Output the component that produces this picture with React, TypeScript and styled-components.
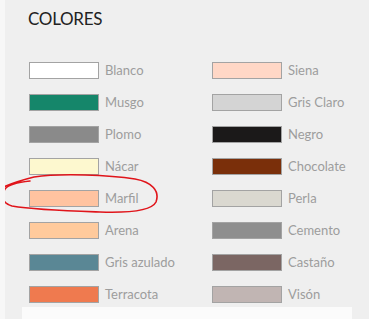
import React from 'react';
import styled, { createGlobalStyle } from 'styled-components';

const GlobalStyle = createGlobalStyle`
  html, body {
    margin: 0;
    padding: 0;
    background: #efefef;
  }
  body {
    font-family: Lato, "Open Sans", "Liberation Sans", sans-serif;
  }
`;

interface Swatch {
  name: string;
  color: string;
}

const leftColors: Swatch[] = [
  { name: 'Blanco', color: '#ffffff' },
  { name: 'Musgo', color: '#15866a' },
  { name: 'Plomo', color: '#8a8a8a' },
  { name: 'Nácar', color: '#fdf8cf' },
  { name: 'Marfil', color: '#ffc3a0' },
  { name: 'Arena', color: '#ffca9c' },
  { name: 'Gris azulado', color: '#5a8795' },
  { name: 'Terracota', color: '#ef7a4f' },
];

const rightColors: Swatch[] = [
  { name: 'Siena', color: '#ffd7c6' },
  { name: 'Gris Claro', color: '#d4d4d4' },
  { name: 'Negro', color: '#1b1919' },
  { name: 'Chocolate', color: '#7a2f0a' },
  { name: 'Perla', color: '#dad8d0' },
  { name: 'Cemento', color: '#8e8e8e' },
  { name: 'Castaño', color: '#7b6663' },
  { name: 'Visón', color: '#c1b5b3' },
];

const Page = styled.div`
  position: relative;
  width: 369px;
  height: 319px;
  overflow: hidden;
  border-left: 5px solid #f7f7f7;
  box-sizing: border-box;
  display: flex;
  flex-direction: column;
`;

const Title = styled.h3`
  margin: 0;
  padding: 8px 0 0 23px;
  height: 62px;
  box-sizing: border-box;
  font-size: 17px;
  font-weight: 400;
  letter-spacing: -0.3px;
  color: #222;
`;

const Grid = styled.div`
  display: grid;
  grid-template-columns: 183px 150px;
  grid-auto-flow: column;
  grid-template-rows: repeat(8, 17px);
  row-gap: 15px;
  padding-left: 24px;
`;

const Row = styled.div`
  display: flex;
  align-items: center;
  height: 17px;
  gap: 6px;
`;

const Box = styled.span<{ $color: string }>`
  display: block;
  width: 70px;
  height: 17px;
  box-sizing: border-box;
  background: ${(p) => p.$color};
  border: 1px solid #a3a3a3;
`;

const Label = styled.span`
  font-size: 13px;
  color: #9d9d9d;
  line-height: 17px;
  white-space: nowrap;
`;

const Footer = styled.div`
  margin: 4px 0 0 17px;
  width: 330px;
  flex: 1;
  background: #fbfbfb;
`;

const Scribble = styled.svg`
  position: absolute;
  left: -5px;
  top: 0;
  pointer-events: none;
`;

const ColorRow = ({ s }: { s: Swatch }) => (
  <Row>
    <Box $color={s.color} />
    <Label>{s.name}</Label>
  </Row>
);

export default function App() {
  return (
    <>
      <GlobalStyle />
      <Page>
        <Title>COLORES</Title>
        <Grid>
          {[...leftColors, ...rightColors].map((s) => (
            <ColorRow key={s.name} s={s} />
          ))}
        </Grid>
        <Footer />
        <Scribble width="369" height="319" viewBox="0 0 369 319">
          <path
            d="M1 188 C 10 184, 22 180, 34 177 C 60 173, 110 175, 135 179 C 152 182, 160 191, 156 202 C 152 210, 130 213, 100 212 C 70 211, 35 210, 12 206 C 2 203, 1 196, 5 189 C 9 184, 20 182, 30 181"
            fill="none"
            stroke="#e0141a"
            strokeWidth="1.6"
            strokeLinecap="round"
          />
        </Scribble>
      </Page>
    </>
  );
}
